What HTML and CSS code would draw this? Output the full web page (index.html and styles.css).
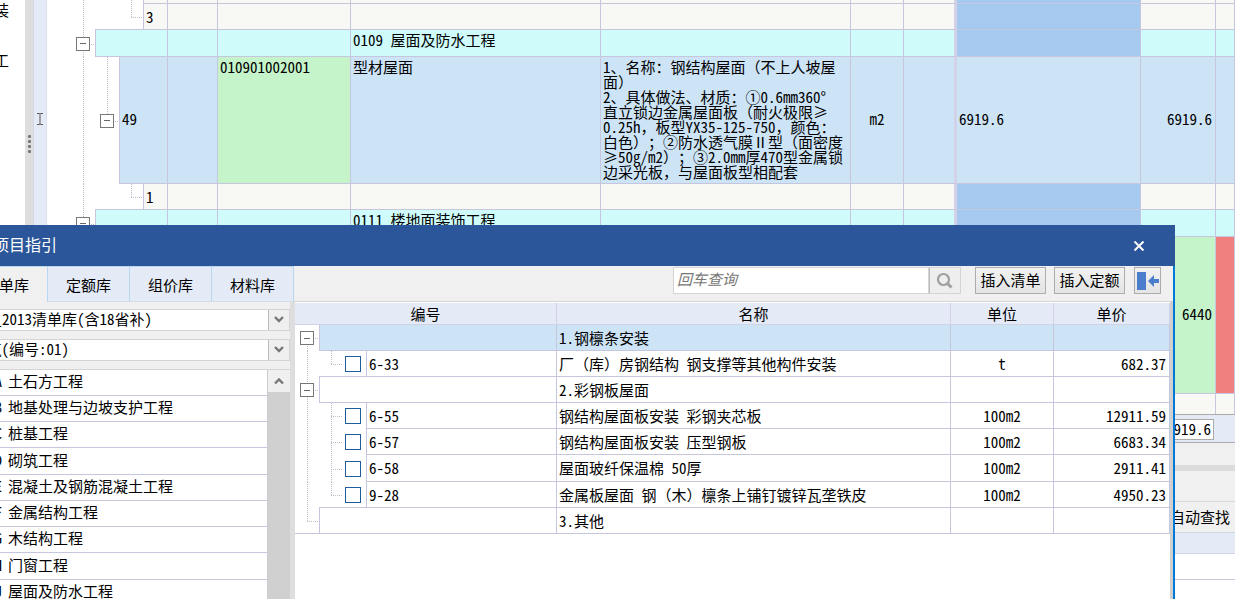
FILE: index.html
```html
<!DOCTYPE html>
<html lang="zh-CN">
<head>
<meta charset="utf-8">
<title>项目指引</title>
<link rel="stylesheet" href="styles.css">
</head>
<body>
<div class="app">
  <aside class="side">
    <div class="side-line">安装</div>
    <div class="side-line">土石方工</div>
  </aside>
  <div class="splitter"><i></i><i></i><i></i><i></i></div>
  <main class="pane">
    <div class="sheet">
      <div class="indicator">
        <svg width="8" height="12" viewBox="0 0 8 12"><path d="M1 .5h2.500l.5.5.5-.5H7M4 1v10M1 11.500h2.500L4 11l.5.5H7" fill="none" stroke="#555"/></svg>
      </div>
      <table class="grid">
        <colgroup><col class="c-tree"><col class="c-kind"><col class="c-code"><col class="c-name"><col class="c-desc"><col class="c-unit"><col class="c-lock"><col class="c-expr"><col class="c-qty"><col></colgroup>
        <tbody>
          <tr class="r-cut"><td class="tree"><div class="node"><span class="guide pass"></span><span class="guide"></span><span class="guide pass"></span><span class="box"></span></div></td><td></td><td></td><td></td><td></td><td></td><td class="edge"></td><td class="sel"></td><td></td><td></td></tr>
          <tr class="r-leaf"><td class="tree"><div class="node"><span class="guide pass"></span><span class="guide floor"></span><span class="guide elbow floor"></span><span class="box">3</span></div></td><td></td><td></td><td></td><td></td><td></td><td class="edge"></td><td class="sel"></td><td></td><td></td></tr>
          <tr class="r-group"><td class="tree"><div class="node"><span class="guide pass arm"><button class="toggle" aria-label="折叠"></button></span><span class="box"></span></div></td><td></td><td></td><td>0109 屋面及防水工程</td><td></td><td></td><td class="edge"></td><td class="sel"></td><td></td><td></td></tr>
          <tr class="r-item"><td class="tree"><div class="node"><span class="guide pass"></span><span class="guide elbow"><button class="toggle" aria-label="折叠"></button></span><span class="box">49</span></div></td><td></td><td class="green top">010901002001</td><td class="top">型材屋面</td><td class="top desc">1、名称：钢结构屋面<span class="full">（</span>不上人坡屋
面<span class="full">）</span>
2、具体做法、材质：①0.6mm360°
直立锁边金属屋面板<span class="full">（</span>耐火极限≥
0.25h<span class="full">，</span>板型YX35-125-750<span class="full">，</span>颜色：
白色<span class="full">）；</span>②防水透气膜Ⅱ型<span class="full">（</span>面密度
≥50g/m2<span class="full">）；</span>③2.0mm厚470型金属锁
边采光板<span class="full">，</span>与屋面板型相配套</td><td class="mid">m2</td><td class="edge"></td><td>6919.6</td><td class="num">6919.6</td><td></td></tr>
          <tr class="r-leaf"><td class="tree"><div class="node"><span class="guide pass"></span><span class="guide floor"></span><span class="guide elbow floor"></span><span class="box">1</span></div></td><td></td><td></td><td></td><td></td><td></td><td class="edge"></td><td class="sel"></td><td></td><td></td></tr>
          <tr class="r-group"><td class="tree"><div class="node"><span class="guide pass arm"><button class="toggle" aria-label="折叠"></button></span><span class="box"></span></div></td><td></td><td></td><td>0111 楼地面装饰工程</td><td></td><td></td><td class="edge"></td><td class="sel"></td><td></td><td></td></tr>
          <tr class="r-tall"><td class="tree"></td><td></td><td></td><td></td><td></td><td></td><td class="edge"></td><td></td><td class="num green">6440</td><td class="red"></td></tr>
          <tr class="r-last"><td class="tree"></td><td></td><td></td><td></td><td></td><td></td><td class="edge"></td><td></td><td></td><td></td></tr>
        </tbody>
      </table>
    </div>
    <div class="totals"><input class="total" value="6919.6" aria-label="合计" readonly></div>
    <div class="band"></div>
    <div class="bar"></div>
    <div class="band tall"></div>
    <div class="find"><span>自动查找</span></div>
    <div class="lower-head"></div>
    <div class="lower-row"></div>
    <div class="lower-rest"></div>
  </main>
</div>

<section class="dialog">
  <header class="titlebar">
    <div class="title">清单项目指引</div>
    <button class="close" aria-label="关闭"><svg width="12" height="10" viewBox="0 0 12 10"><path d="M1.500.5l9 9M10.500.5l-9 9" stroke="#fff" stroke-width="2"/></svg></button>
  </header>
  <div class="tools">
    <nav class="tabs">
      <button class="tab on">清单库</button><button class="tab">定额库</button><button class="tab">组价库</button><button class="tab">材料库</button>
    </nav>
    <div class="actions">
      <div class="search"><input class="query" type="text" placeholder="回车查询" aria-label="回车查询"><button class="go" aria-label="查询"><svg width="18" height="18" viewBox="0 0 18 18"><circle cx="7.500" cy="7.500" r="5.500" fill="none" stroke="#a0a0a0" stroke-width="2.200"/><path d="M11.500 11.500l4 4" stroke="#a0a0a0" stroke-width="3"/></svg></button></div>
      <button class="btn">插入清单</button>
      <button class="btn narrow-gap">插入定额</button>
      <button class="btn dock" aria-label="停靠"><svg width="22" height="18" viewBox="0 0 22 18"><path d="M0 0h9v18H0z" fill="#4a7dcc"/><path d="M11 9L17 3V7h5v4h-5V15z" fill="#4a7dcc"/></svg></button>
    </div>
  </div>
  <div class="body">
    <div class="library">
      <div class="combo"><div class="combo-text">_2013清单库(含18省补)</div><button class="arrow" aria-label="展开"><svg width="10" height="8" viewBox="0 0 10 8"><path d="M1 1l4 4 4-4" fill="none" stroke="#777" stroke-width="2.400"/></svg></button></div>
      <div class="combo"><div class="combo-text">筑(编号:01)</div><button class="arrow" aria-label="展开"><svg width="10" height="8" viewBox="0 0 10 8"><path d="M1 1l4 4 4-4" fill="none" stroke="#777" stroke-width="2.400"/></svg></button></div>
      <div class="chapters">
        <ul class="list">
          <li><b>A</b>土石方工程</li>
          <li><b>B</b>地基处理与边坡支护工程</li>
          <li><b>C</b>桩基工程</li>
          <li><b>D</b>砌筑工程</li>
          <li><b>E</b>混凝土及钢筋混凝土工程</li>
          <li><b>F</b>金属结构工程</li>
          <li><b>G</b>木结构工程</li>
          <li><b>H</b>门窗工程</li>
          <li><b>J</b>屋面及防水工程</li>
        </ul>
        <div class="scroll"><button class="up" aria-label="向上"><svg width="10" height="8" viewBox="0 0 10 8"><path d="M1 6.500l4-4 4 4" fill="none" stroke="#777" stroke-width="2.400"/></svg></button></div>
      </div>
    </div>
    <div class="divider"></div>
    <div class="results">
      <table class="quota">
        <colgroup><col class="q-code"><col><col class="q-unit"><col class="q-price"></colgroup>
        <thead><tr><th>编号</th><th>名称</th><th>单位</th><th>单价</th></tr></thead>
        <tbody>
          <tr class="hot"><td class="tree"><div class="node"><span class="guide first arm"><button class="toggle" aria-label="折叠"></button></span><span class="box"></span></div></td><td>1.钢檩条安装</td><td></td><td></td></tr>
          <tr><td class="tree"><div class="node"><span class="guide pass"></span><span class="guide elbow floor"></span><label class="check floor"><input type="checkbox" aria-label="6-33"></label><span class="box">6-33</span></div></td><td>厂<span class="full">（</span>库<span class="full">）</span>房钢结构 钢支撑等其他构件安装</td><td class="mid">t</td><td class="num">682.37</td></tr>
          <tr><td class="tree"><div class="node"><span class="guide pass arm"><button class="toggle" aria-label="折叠"></button></span><span class="box"></span></div></td><td>2.彩钢板屋面</td><td></td><td></td></tr>
          <tr><td class="tree"><div class="node"><span class="guide pass"></span><span class="guide pass arm"></span><label class="check"><input type="checkbox" aria-label="6-55"></label><span class="box">6-55</span></div></td><td>钢结构屋面板安装 彩钢夹芯板</td><td class="mid">100m2</td><td class="num">12911.59</td></tr>
          <tr><td class="tree"><div class="node"><span class="guide pass"></span><span class="guide pass arm"></span><label class="check"><input type="checkbox" aria-label="6-57"></label><span class="box">6-57</span></div></td><td>钢结构屋面板安装 压型钢板</td><td class="mid">100m2</td><td class="num">6683.34</td></tr>
          <tr><td class="tree"><div class="node"><span class="guide pass"></span><span class="guide pass arm"></span><label class="check"><input type="checkbox" aria-label="6-58"></label><span class="box">6-58</span></div></td><td>屋面玻纤保温棉 50厚</td><td class="mid">100m2</td><td class="num">2911.41</td></tr>
          <tr><td class="tree"><div class="node"><span class="guide pass"></span><span class="guide elbow floor"></span><label class="check floor"><input type="checkbox" aria-label="9-28"></label><span class="box">9-28</span></div></td><td>金属板屋面 钢<span class="full">（</span>木<span class="full">）</span>檩条上铺钉镀锌瓦垄铁皮</td><td class="mid">100m2</td><td class="num">4950.23</td></tr>
          <tr class="end"><td class="tree"><div class="node"><span class="guide elbow"></span><span class="box"></span></div></td><td>3.其他</td><td></td><td></td></tr>
        </tbody>
      </table>
    </div>
  </div>
</section>
</body>
</html>
```

FILE: styles.css
```css
:root {
  --line: #c6c6de;
  --pale: #e4ebf7;
  --gray: #f0f0f0;
  --hot: #cde4f7;
  --leaf: #f8f8f5;
  --dots: #bcbccb;
}

* { box-sizing: border-box; }

body {
  margin: 0;
  height: 100vh;
  overflow: hidden;
  position: relative;
  background: #fff;
  color: #000;
  font: 15px/20px "Noto Sans CJK SC", sans-serif;
  font-feature-settings: "hwid";
  text-spacing-trim: space-all;
}

button, input {
  font: inherit;
  font-feature-settings: inherit;
  color: inherit;
  margin: 0;
  padding: 0;
}

/* punctuation that keeps its full-width form */
.full { font-feature-settings: normal; }

.app { display: flex; height: 100%; }

.side { width: 25px; overflow: hidden; }
.side-line {
  display: flex;
  justify-content: flex-end;
  width: 9px;
  height: 50px;
  white-space: nowrap;
}

.splitter {
  width: 8px;
  padding-top: 135px;
  background: #dedede;
  display: flex;
  flex-direction: column;
  align-items: center;
  gap: 2px;
}
.splitter i { width: 3px; height: 3px; background: #777; border-radius: 1px; }

.pane { flex: 1; min-width: 0; display: flex; flex-direction: column; }
.sheet { display: flex; overflow: hidden; flex: none; }
.indicator {
  width: 14px;
  flex: none;
  padding: 113px 0 0 2px;
  background: var(--pale);
  border-left: 1px solid #d3d7e6;
  border-right: 1px solid #dbe0ee;
}
.indicator svg { display: block; }

table { border-collapse: separate; border-spacing: 0; table-layout: fixed; }
td, th { padding: 0 2px; font-weight: 400; white-space: nowrap; overflow: hidden; }
td { border-right: 1px solid var(--line); border-bottom: 1px solid var(--line); text-align: left; }

.grid { flex: 1; width: 100%; }
.c-tree { width: 121px; }
.c-kind { width: 50px; }
.c-code { width: 133px; }
.c-name, .c-desc { width: 250px; }
.c-unit, .c-lock { width: 53px; }
.c-expr { width: 184px; }
.c-qty { width: 75px; }

.r-cut td { height: 4px; }
.r-leaf td { height: 26px; }
.r-group td { height: 27px; vertical-align: top; }
.r-item td { height: 127px; padding-bottom: 2px; }
.r-tall td { height: 157px; padding-bottom: 2px; }
.r-last td { height: 20px; border-bottom: 0; }
.r-cut td, .r-leaf td, .r-last td, .r-cut .box, .r-leaf .box { background: var(--leaf); }
.r-group td, .r-group .box { background: #cffcfb; }
.r-item td, .r-item .box, .hot td, .hot .box { background: var(--hot); }
.grid td.edge { border-right: 3px solid #d3d2e8; }
.grid td.sel { background: #a6c9ef; }
.grid td.green { background: #c5f3ca; }
.grid td.red { background: #f08080; }
.top { vertical-align: top; }
.desc { white-space: pre; line-height: 15px; padding-top: 2px; }
.mid { text-align: center; }
.num { text-align: right; padding-right: 3px; }

/* tree column */
.grid td.tree, .quota td.tree { padding: 0; background: #fff; border-bottom: 0; }
.grid .node { padding-left: 24px; }
.node { display: flex; height: 100%; }
.guide { position: relative; flex: none; width: 24px; }
.guide::before {
  content: "";
  position: absolute;
  left: 12px;
  top: 0;
  width: 1px;
}
.guide.pass::before, .guide.elbow::before, .guide.first::before {
  background: repeating-linear-gradient(var(--dots) 0 1px, transparent 1px 2px);
}
.guide.pass::before { height: 100%; }
.guide.elbow::before { height: 50%; }
.guide.first::before { top: 50%; height: 50%; }
.guide.elbow::after, .guide.arm::after {
  content: "";
  position: absolute;
  left: 12px;
  right: 0;
  top: 50%;
  height: 1px;
  background: repeating-linear-gradient(90deg, var(--dots) 0 1px, transparent 1px 2px);
}
.floor { border-bottom: 1px solid var(--line); }
.toggle {
  position: absolute;
  z-index: 1;
  left: 5px;
  top: calc(50% - 7px);
  width: 14px;
  height: 14px;
  border: 1px solid #777;
  background: linear-gradient(#666, #666) center / 6px 1px no-repeat #fff;
}
.box {
  flex: 1;
  display: flex;
  align-items: center;
  padding-left: 2px;
  border-left: 1px solid var(--line);
  border-bottom: 1px solid var(--line);
}
.r-item .box { padding-bottom: 2px; }

/* area under the sheet */
.totals {
  flex: none;
  height: 29px;
  padding: 4px 21px 0 0;
  display: flex;
  justify-content: flex-end;
  align-items: flex-start;
  background: var(--pale);
  border-top: 1px solid #aaa;
  border-bottom: 1px solid #aaa;
}
.total { width: 80px; height: 21px; padding: 0 2px 2px 0; text-align: right; border: 1px solid #aaa; background: #fff; }
.band { flex: none; height: 22px; background: var(--gray); }
.bar { flex: none; height: 6px; background: #dcdcdc; }
.band.tall { height: 31px; border-bottom: 1px solid #d8d8d8; }
.find { flex: none; height: 30px; padding: 5px 5px 0; text-align: right; background: var(--gray); }
.lower-head { flex: none; height: 22px; background: var(--pale); border: solid #d3d3e8; border-width: 1px 0; }
.lower-row { flex: none; height: 26px; border-bottom: 1px solid var(--line); }
.lower-rest { flex: 1; }

/* floating window */
.dialog {
  position: absolute;
  z-index: 5;
  top: 225px;
  right: 60px;
  bottom: 0;
  left: 0;
  display: flex;
  flex-direction: column;
  background: var(--gray);
  border-right: 2px solid #0078d7;
}
.titlebar {
  flex: none;
  height: 41px;
  display: flex;
  justify-content: space-between;
  align-items: center;
  margin-right: -2px;
  background: #2b579a;
  color: #fff;
}
.title { width: 57px; padding-bottom: 4px; display: flex; justify-content: flex-end; overflow: hidden; white-space: nowrap; font-size: 16px; }
.close { width: 24px; height: 24px; margin-right: 24px; border: 0; background: none; display: flex; align-items: center; justify-content: center; }

.tools { flex: none; height: 36px; display: flex; justify-content: space-between; }
.tabs { display: flex; }
.tab {
  width: 82px;
  padding-top: 2px;
  border: 0;
  border-right: 1px solid #b8d6f0;
  border-bottom: 1px solid #d6dbe6;
  border-top: 1px solid #b8d6f0;
  background: var(--pale);
  overflow: hidden;
}
.tab.on { width: 48px; display: flex; justify-content: flex-end; align-items: center; padding: 0 18px 0 0; background: var(--gray); border-bottom: 0; white-space: nowrap; }
.actions { flex: 1; display: flex; justify-content: flex-end; align-items: flex-start; padding: 1px 12px 0 0; border-bottom: 1px solid #d4d4d4; }
.search { display: flex; height: 27px; margin-right: 14px; }
.query { width: 256px; padding: 0 3px 3px; border: 1px solid #d4d4d4; background: #fff; }
.query::placeholder { color: #777; font-style: italic; opacity: 1; }
.go { width: 32px; border: 1px solid #d4d4d4; border-left-color: #bbb; background: #eee; display: flex; align-items: center; justify-content: center; }
.btn { width: 71px; height: 27px; padding-bottom: 2px; border: 1px solid #adadad; background: linear-gradient(#f2f2f2, #e4e4e4); white-space: nowrap; }
.narrow-gap { margin: 0 9px 0 8px; }
.dock { width: 27px; padding: 0; display: flex; align-items: center; justify-content: center; }

.body { flex: 1; min-height: 0; display: flex; }
.library { width: 290px; flex: none; display: flex; flex-direction: column; padding-top: 7px; }
.combo { flex: none; display: flex; height: 22px; margin-bottom: 8px; border: solid #d4d4d4; border-width: 1px 0; background: #fff; }
.combo-text { display: flex; flex: none; justify-content: flex-end; width: 152px; overflow: hidden; white-space: nowrap; line-height: 18px; }
.combo + .combo .combo-text { width: 69px; }
.combo .arrow { margin-left: auto; }
.arrow { width: 22px; border: 1px solid #d4d4d4; border-width: 0 1px; border-left-color: #bbb; background: #efefef; display: flex; align-items: center; justify-content: center; }
.chapters { flex: 1; min-height: 0; display: flex; border-top: 1px solid #d4d4d4; overflow: hidden; }
.list { flex: 1; margin: 0; padding: 0; list-style: none; background: #fff; }
.list li { height: 26px; padding-bottom: 3px; display: flex; align-items: center; gap: 6px; border-bottom: 1px solid var(--line); }
.list li:nth-child(4n) { height: 27px; }
.list b { width: 2px; display: flex; justify-content: flex-end; overflow: hidden; font-weight: 400; }
.scroll { width: 23px; border-left: 1px solid #ccc; background: #d0d0d0; }
.up { width: 22px; height: 22px; border: 0; background: var(--gray); display: flex; align-items: center; justify-content: center; }
.divider { width: 5px; flex: none; background: #dedede; }
.results { flex: 1; min-width: 0; padding-top: 1px; margin-right: 3px; background: #fff; box-shadow: 3px 0 0 #d0d0d0; }

.quota { width: 100%; }
.q-code { width: 262px; }
.q-unit { width: 103px; }
.q-price { width: 116px; }
.quota th { height: 22px; background: var(--pale); border-right: 1px solid #d0d2e6; border-bottom: 1px solid #d0d2e6; }
.quota td { height: 26px; }
.quota tbody tr:nth-child(6) td { height: 27px; }
.quota .end td.tree { border-bottom: 1px solid var(--line); }
.quota .end .box { border-bottom: 0; }
.check { width: 23px; flex: none; display: flex; align-items: center; padding-left: 2px; }
.check input {
  appearance: none;
  width: 16px;
  height: 16px;
  border: 1px solid #1f5c99;
  background: #fff;
}
```
